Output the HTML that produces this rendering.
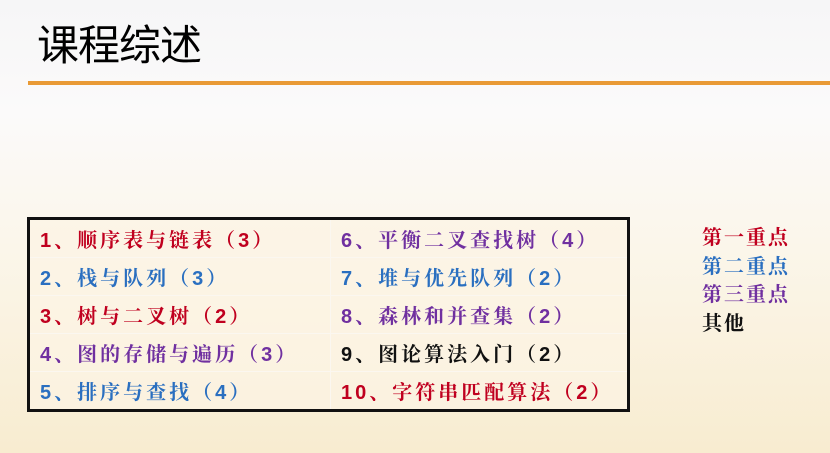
<!DOCTYPE html>
<html><head><meta charset="utf-8"><style>
body{margin:0;width:830px;height:453px;overflow:hidden;position:relative;
background:linear-gradient(180deg,#f6f6f7 0%,#fbfafa 25%,#fbf6ea 55%,#f8ecd0 100%);
font-family:"Liberation Serif","Noto Serif CJK SC",serif;}
.title{position:absolute;left:37px;top:12px;font-family:"Liberation Sans","Noto Sans CJK SC",sans-serif;font-size:42px;color:#000;letter-spacing:-1px}
.line{position:absolute;left:28px;top:81px;width:802px;height:4px;background:#e99a35}
table{position:absolute;left:27px;top:217px;width:603px;height:192px;border:3px solid #111;border-collapse:collapse;background:rgba(252,243,228,.7)}
td{border:1px solid #fbf7f0;padding:0 0 0 10px;font-size:20px;font-weight:bold;letter-spacing:3px;height:37px;white-space:nowrap;font-family:"Liberation Sans","Noto Serif CJK SC",serif}
td.l{width:290px}
.r{color:#c0001f}.b{color:#2a6fc0}.p{color:#7030a0}.k{color:#111}
.leg{position:absolute;left:702px;top:224px;font-size:20px;font-weight:bold;letter-spacing:2px;line-height:28.7px}
</style></head><body>
<div class="title">课程综述</div>
<div class="line"></div>
<table>
<tr><td class="l r">1、顺序表与链表（3）</td><td class="p">6、平衡二叉查找树（4）</td></tr>
<tr><td class="l b">2、栈与队列（3）</td><td class="b">7、堆与优先队列（2）</td></tr>
<tr><td class="l r">3、树与二叉树（2）</td><td class="p">8、森林和并查集（2）</td></tr>
<tr><td class="l p">4、图的存储与遍历（3）</td><td class="k">9、图论算法入门（2）</td></tr>
<tr><td class="l b">5、排序与查找（4）</td><td class="r">10、字符串匹配算法（2）</td></tr>
</table>
<div class="leg"><div class="r">第一重点</div><div class="b">第二重点</div><div class="p">第三重点</div><div class="k">其他</div></div>
</body></html>
